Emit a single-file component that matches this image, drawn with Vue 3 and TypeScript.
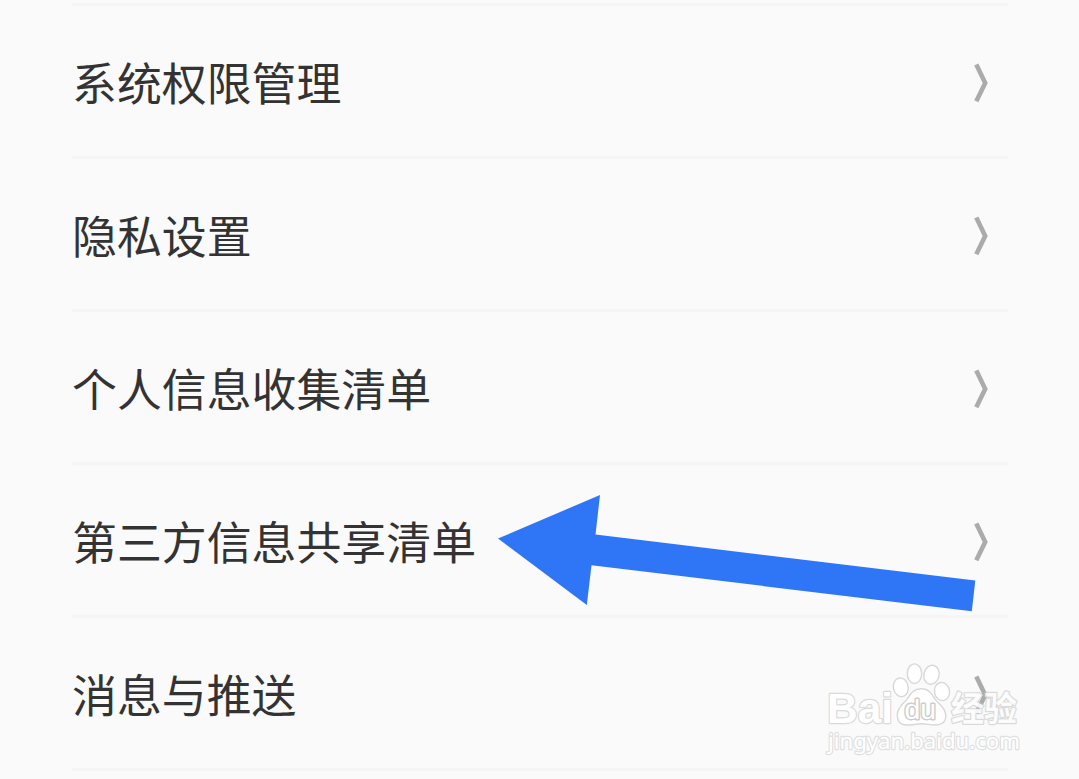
<script setup lang="ts">
const items: string[] = ['系统权限管理', '隐私设置', '个人信息收集清单', '第三方信息共享清单', '消息与推送']
</script>

<template>
  <main class="page">
    <ul class="list">
      <li v-for="item in items" :key="item" class="row">
        <span class="label">{{ item }}</span>
        <svg class="chevron" width="16" height="40" viewBox="0 0 16 40">
          <path d="M2.3 1.5 11.2 20 2.3 38.2" />
        </svg>
      </li>
    </ul>

    <svg class="arrow" width="480" height="120" viewBox="497 493 480 120">
      <path d="M498 538.5 600 495 595.5 534.5 975.3 580.5 971.8 611.2 591.5 565.3 586.8 605Z" />
    </svg>

    <svg class="watermark" width="210" height="106" viewBox="820 655 210 106">
      <text class="brand" x="827" y="723" textLength="66" lengthAdjust="spacingAndGlyphs">Bai</text>
      <g class="paw">
        <ellipse cx="900.8" cy="687.3" rx="7.4" ry="9.5" transform="rotate(-10 900.8 687.3)" />
        <ellipse cx="914.5" cy="673.7" rx="7.2" ry="9.8" />
        <ellipse cx="931.5" cy="674.8" rx="7.6" ry="9.6" transform="rotate(14 931.5 674.8)" />
        <ellipse cx="942" cy="691.5" rx="7.5" ry="9.2" transform="rotate(-10 942 691.5)" />
        <path d="M921 688.8C929 688.8 932 694 935 699C938 704 945.8 707 945.8 716C945.8 722.5 941 725.3 935 725C929 724.7 926 723.8 921 723.8C915 723.8 912 725.3 906 725C900 724.7 897.3 721 897.3 715C897.3 706 905 703 908 698C911 693 914 688.8 921 688.8Z" />
      </g>
      <text class="du" x="904.5" y="718.5" textLength="31.5" lengthAdjust="spacingAndGlyphs">du</text>
      <text class="brand chinese" x="951" y="721" textLength="66" lengthAdjust="spacingAndGlyphs">经验</text>
      <text class="site" x="828" y="749" textLength="192" lengthAdjust="spacingAndGlyphs">jingyan.baidu.com</text>
    </svg>
  </main>
</template>

<style>
body {
  margin: 0;
  background: #fafafa;
  overflow: hidden;
}
</style>

<style scoped>
.page {
  position: relative;
  box-sizing: border-box;
  width: 1079px;
  height: 779px;
  padding: 3px 71px 0 72px;
  overflow: hidden;
  background: #fafafa;
  font-family: "Noto Sans CJK SC", sans-serif;
}

.list {
  margin: 0;
  padding: 0;
  list-style: none;
  border-bottom: 3px solid #f5f5f5;
}

.row {
  display: flex;
  align-items: center;
  justify-content: space-between;
  box-sizing: border-box;
  height: 153px;
  padding-right: 18px;
  border-top: 3px solid #f5f5f5;
}

.label {
  padding-top: 2px;
  color: #333;
  font-size: 44.9px;
  line-height: 66px;
}

.chevron {
  display: block;
  margin-top: 3px;
}

.chevron path {
  fill: none;
  stroke: #ababab;
  stroke-width: 4.6;
}

.arrow {
  position: absolute;
  left: 497px;
  top: 493px;
}

.arrow path {
  fill: #2f76f6;
}

.watermark {
  position: absolute;
  left: 820px;
  top: 655px;
}

.watermark text {
  paint-order: stroke;
  stroke: #dadada;
  stroke-width: 2.4px;
  stroke-linejoin: round;
  fill: #fff;
}

.paw {
  fill: #fff;
  stroke: #d8d8d8;
  stroke-width: 1.4;
}

.brand {
  font: bold 43px "Liberation Sans", sans-serif;
}

.watermark .chinese {
  font: bold 34px "Noto Sans CJK SC", sans-serif;
  fill-opacity: 0.9;
  stroke: #c8c8c8;
  stroke-opacity: 0.65;
}

.watermark .du {
  font: 27px "Liberation Sans", sans-serif;
  stroke: #ccc;
  stroke-width: 2.8px;
}

.watermark .site {
  font: 22px "Noto Sans", sans-serif;
  stroke: #e0e0e0;
}
</style>
